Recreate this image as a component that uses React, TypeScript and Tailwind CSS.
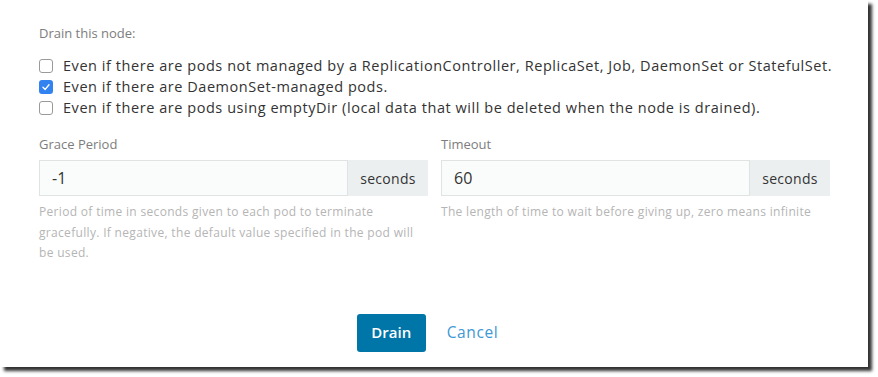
import React from "react";

const font = { fontFamily: '"Open Sans", "Noto Sans", sans-serif' };

function Box({ checked }: { checked?: boolean }) {
  return checked ? (
    <span className="flex h-[14px] w-[14px] shrink-0 items-center justify-center rounded-[3px] bg-[#3282f0]">
      <svg width="10" height="10" viewBox="0 0 10 10">
        <path d="M2 5.2 L4.2 7.4 L8 2.8" fill="none" stroke="#fff" strokeWidth="1.4" strokeLinecap="round" strokeLinejoin="round" />
      </svg>
    </span>
  ) : (
    <span className="h-[14px] w-[14px] shrink-0 rounded-[3px] border border-[#9a9a9a] bg-white" />
  );
}

function Field({ label, value, help }: { label: string; value: string; help: string }) {
  return (
    <div className="flex flex-col">
      <div className="text-[13px] leading-[18px] text-[#7d7d7d]">{label}</div>
      <div className="mt-[7px] flex h-[36px]">
        <div className="flex flex-1 items-center border border-[#dfe3e4] bg-[#fafbfb] px-[12px] text-[16px] text-[#333]">{value}</div>
        <div className="flex w-[80px] items-center justify-center bg-[#ebeff0] text-[14px] tracking-[0.3px] text-[#333]">seconds</div>
      </div>
      <div className="mt-[6px] text-[12px] leading-[20.5px] tracking-[0.32px] text-[#b5b5b5]">{help}</div>
    </div>
  );
}

export default function App() {
  return (
    <div className="h-[377px] w-[878px] bg-white" style={font}>
      <div className="h-[367px] w-[868px] bg-white shadow-[4px_4px_3px_rgba(0,0,0,0.8)]">
        <div className="pl-[39px] pt-[24px]">
          <div className="text-[13px] leading-[18px] text-[#7d7d7d]">Drain this node:</div>
          <div className="mt-[14px] flex flex-col gap-[1px] text-[14.5px] leading-[20px] tracking-[0.55px] text-[#333]">
            <label className="flex items-center gap-[10px]">
              <Box />
              <span>Even if there are pods not managed by a ReplicationController, ReplicaSet, Job, DaemonSet or StatefulSet.</span>
            </label>
            <label className="flex items-center gap-[10px]">
              <Box checked />
              <span>Even if there are DaemonSet-managed pods.</span>
            </label>
            <label className="flex items-center gap-[10px]">
              <Box />
              <span>Even if there are pods using emptyDir (local data that will be deleted when the node is drained).</span>
            </label>
          </div>
          <div className="mt-[17px] grid w-[791px] grid-cols-2 gap-[13px]">
            <Field label="Grace Period" value="-1" help="Period of time in seconds given to each pod to terminate gracefully. If negative, the default value specified in the pod will be used." />
            <Field label="Timeout" value="60" help="The length of time to wait before giving up, zero means infinite" />
          </div>
        </div>
        <div className="mt-[50px] flex items-center justify-center gap-[21px] pr-[13px]">
          <button className="h-[38px] w-[69px] rounded-[3px] bg-[#0075a8] text-[15px] font-semibold text-white">Drain</button>
          <button className="text-[15.5px] tracking-[0.6px] text-[#3d98d3]">Cancel</button>
        </div>
      </div>
    </div>
  );
}
